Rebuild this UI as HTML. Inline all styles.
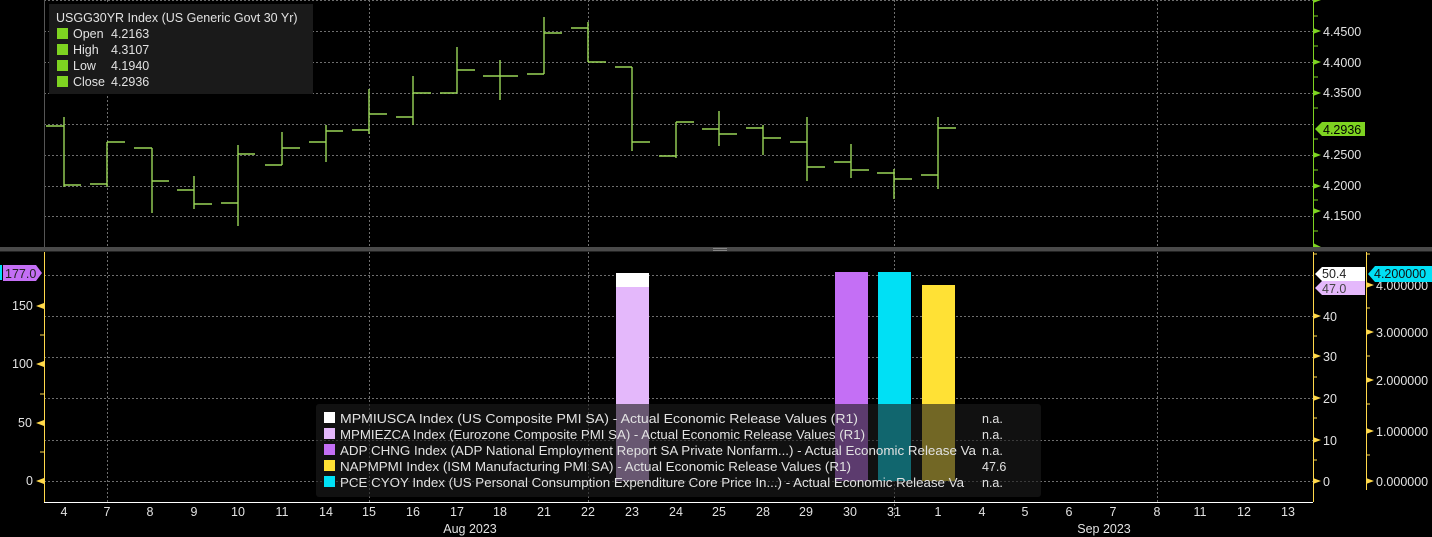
<!DOCTYPE html>
<html><head><meta charset="utf-8"><style>
html,body{margin:0;padding:0;background:#000;width:1432px;height:537px;overflow:hidden}
svg{display:block}
text{font-family:"Liberation Sans",sans-serif;font-size:12.5px;fill:#e2e2e2}
</style></head><body>
<svg width="1432" height="537" viewBox="0 0 1432 537" xmlns="http://www.w3.org/2000/svg">
<rect width="1432" height="537" fill="#000"/>
<g stroke="#6e6e6e" stroke-width="1" stroke-dasharray="2,2" fill="none">
<line x1="44" y1="0.5" x2="1313" y2="0.5"/>
<line x1="44" y1="31.5" x2="1313" y2="31.5"/>
<line x1="44" y1="62.5" x2="1313" y2="62.5"/>
<line x1="44" y1="93.5" x2="1313" y2="93.5"/>
<line x1="44" y1="124.5" x2="1313" y2="124.5"/>
<line x1="44" y1="155.5" x2="1313" y2="155.5"/>
<line x1="44" y1="186.5" x2="1313" y2="186.5"/>
<line x1="44" y1="216.5" x2="1313" y2="216.5"/>
<line x1="44" y1="275.5" x2="1313" y2="275.5"/>
<line x1="44" y1="316.5" x2="1313" y2="316.5"/>
<line x1="44" y1="357.5" x2="1313" y2="357.5"/>
<line x1="44" y1="398.5" x2="1313" y2="398.5"/>
<line x1="44" y1="440.5" x2="1313" y2="440.5"/>
<line x1="44" y1="481.5" x2="1313" y2="481.5"/>
<line x1="107.5" y1="0" x2="107.5" y2="502"/>
<line x1="369.5" y1="0" x2="369.5" y2="502"/>
<line x1="588.5" y1="0" x2="588.5" y2="502"/>
<line x1="894.5" y1="0" x2="894.5" y2="520"/>
<line x1="1157.5" y1="0" x2="1157.5" y2="502"/>
</g>
<line x1="44.5" y1="0" x2="44.5" y2="247" stroke="#555" stroke-width="1"/>
<rect x="49" y="4" width="264" height="90" fill="#1a1a1a"/>
<text x="56" y="22">USGG30YR Index (US Generic Govt 30 Yr)</text>
<rect x="57" y="28" width="11" height="11" fill="#7ed321"/><text x="73" y="38">Open</text><text x="111" y="38">4.2163</text>
<rect x="57" y="44" width="11" height="11" fill="#7ed321"/><text x="73" y="54">High</text><text x="111" y="54">4.3107</text>
<rect x="57" y="60" width="11" height="11" fill="#7ed321"/><text x="73" y="70">Low</text><text x="111" y="70">4.1940</text>
<rect x="57" y="76" width="11" height="11" fill="#7ed321"/><text x="73" y="86">Close</text><text x="111" y="86">4.2936</text>
<g stroke="#9ad658" stroke-width="1.4" fill="none">
<path d="M46 126H64M64 117V187M64 185H81"/>
<path d="M90 184H107M107 142V187M107 142H125"/>
<path d="M134 148H152M152 148V213M152 181H169"/>
<path d="M177 190H194M194 176V209M194 204H212"/>
<path d="M221 203H238M238 145V226M238 154H255"/>
<path d="M265 165H282M282 132V165M282 148H300"/>
<path d="M309 142H326M326 125V162M326 131H343"/>
<path d="M352 130H369M369 89V134M369 114H387"/>
<path d="M396 117H413M413 76V125M413 93H431"/>
<path d="M440 93H457M457 47V93M457 70H475"/>
<path d="M483 76H500M500 60V100M500 76H518"/>
<path d="M527 74H544M544 17V74M544 33H562"/>
<path d="M571 28H588M588 22V62M588 62H606"/>
<path d="M615 67H632M632 67V151M632 142H650"/>
<path d="M659 156H676M676 122V158M676 122H694"/>
<path d="M702 129H719M719 111V146M719 134H737"/>
<path d="M746 128H763M763 125V155M763 138H781"/>
<path d="M790 142H807M807 117V181M807 167H825"/>
<path d="M834 162H851M851 144V178M851 170H869"/>
<path d="M877 173H894M894 169V199M894 179H912"/>
<path d="M921 175H938M938 117V189M938 128H956"/>
</g>
<line x1="1313.5" y1="0" x2="1313.5" y2="247" stroke="#7ed321" stroke-width="1"/>
<g fill="#7ed321">
<path d="M1313 28l8 3-8 3z"/><path d="M1313 59l8 3-8 3z"/><path d="M1313 90l8 3-8 3z"/><path d="M1313 152l8 3-8 3z"/><path d="M1313 183l8 3-8 3z"/><path d="M1313 208l8 3-8 3z"/><path d="M1313 0l8 0-8 3z"/><path d="M1313 243l8 4h-8z"/>
</g>
<g stroke="#7ed321"><path d="M1313 16h5M1313 46h5M1313 77h5M1313 108h5M1313 139h5M1313 170h5M1313 200h5M1313 231h5"/></g>
<text x="1323" y="36">4.4500</text>
<text x="1323" y="67">4.4000</text>
<text x="1323" y="97">4.3500</text>
<text x="1323" y="159">4.2500</text>
<text x="1323" y="190">4.2000</text>
<text x="1323" y="220">4.1500</text>
<path d="M1315 129l7-7h43v14h-43z" fill="#7ed321"/>
<text x="1323" y="134" style="fill:#000">4.2936</text>
<rect x="0" y="247" width="1432" height="4" fill="#4a4a4a"/>
<rect x="0" y="251" width="1432" height="1" fill="#222"/>
<path d="M713 248.5h14M713 250.5h14" stroke="#999" stroke-width="0.8"/>
<rect x="616" y="273" width="33" height="14" fill="#ffffff"/>
<rect x="616" y="287" width="33" height="194" fill="#e4b8fb"/>
<rect x="835" y="272" width="33" height="209" fill="#c46ff5"/>
<rect x="878" y="272" width="33" height="209" fill="#00e0f5"/>
<rect x="922" y="285" width="33" height="196" fill="#ffe135"/>
<rect x="316" y="404" width="725" height="93" rx="3" fill="#1c1c1c" fill-opacity="0.62"/>
<rect x="324" y="412" width="11" height="11" fill="#fff"/>
<rect x="324" y="428" width="11" height="11" fill="#e4b8fb"/>
<rect x="324" y="444" width="11" height="11" fill="#c46ff5"/>
<rect x="324" y="460" width="11" height="11" fill="#ffe135"/>
<rect x="324" y="476" width="11" height="11" fill="#00e0f5"/>
<text x="340" y="423" textLength="518" lengthAdjust="spacingAndGlyphs">MPMIUSCA Index (US Composite PMI SA) - Actual Economic Release Values (R1)</text>
<text x="340" y="439" textLength="525" lengthAdjust="spacingAndGlyphs">MPMIEZCA Index (Eurozone Composite PMI SA) - Actual Economic Release Values (R1)</text>
<text x="340" y="455" textLength="636" lengthAdjust="spacingAndGlyphs">ADP CHNG Index (ADP National Employment Report SA Private Nonfarm...) - Actual Economic Release Va</text>
<text x="340" y="471" textLength="511" lengthAdjust="spacingAndGlyphs">NAPMPMI Index (ISM Manufacturing PMI SA) - Actual Economic Release Values (R1)</text>
<text x="340" y="487" textLength="624" lengthAdjust="spacingAndGlyphs">PCE CYOY Index (US Personal Consumption Expenditure Core Price In...) - Actual Economic Release Va</text>
<text x="982" y="423">n.a.</text><text x="982" y="439">n.a.</text><text x="982" y="455">n.a.</text><text x="982" y="471">47.6</text><text x="982" y="487">n.a.</text>
<line x1="44.5" y1="252" x2="44.5" y2="502" stroke="#ffd84a"/>
<g fill="#ffd84a"><path d="M44 303l-8 3 8 3z"/><path d="M44 361l-8 3 8 3z"/><path d="M44 420l-8 3 8 3z"/><path d="M44 478l-8 3 8 3z"/></g>
<g stroke="#ffd84a"><path d="M44 335h-4M44 394h-4M44 452h-4"/></g>
<text x="12" y="310">150</text><text x="12" y="368">100</text><text x="18" y="427">50</text><text x="26" y="485">0</text>
<rect x="0" y="265" width="2" height="15" fill="#00e0f5"/>
<path d="M3 265h33l6 8-6 8h-33z" fill="#c46ff5"/>
<text x="5" y="278" style="fill:#222">177.0</text>
<line x1="44" y1="502.5" x2="1313" y2="502.5" stroke="#fff"/>
<line x1="1313.5" y1="252" x2="1313.5" y2="502" stroke="#ffd84a"/>
<line x1="1366.5" y1="252" x2="1366.5" y2="490" stroke="#ffd84a"/>
<g fill="#ffd84a">
<path d="M1313 313l8 3-8 3z"/><path d="M1313 353l8 3-8 3z"/><path d="M1313 395l8 3-8 3z"/><path d="M1313 437l8 3-8 3z"/><path d="M1313 478l8 3-8 3z"/>
<path d="M1366 282l8 3-8 3z"/><path d="M1366 329l8 3-8 3z"/><path d="M1366 377l8 3-8 3z"/><path d="M1366 428l8 3-8 3z"/><path d="M1366 478l8 3-8 3z"/>
</g>
<g stroke="#ffd84a"><path d="M1313 254h4M1313 336h4M1313 377h4M1313 418h4M1313 460h4M1366 254h4M1366 308h4M1366 356h4M1366 404h4M1366 455h4"/></g>
<text x="1323" y="321">40</text><text x="1323" y="361">30</text><text x="1323" y="403">20</text><text x="1323" y="445">10</text><text x="1323" y="486">0</text>
<text x="1376" y="290">4.000000</text><text x="1376" y="337">3.000000</text><text x="1376" y="385">2.000000</text><text x="1376" y="436">1.000000</text><text x="1376" y="486">0.000000</text>
<path d="M1315 274l7-7h43v14h-43z" fill="#fff"/>
<text x="1322" y="278" style="fill:#222">50.4</text>
<path d="M1315 288l7-7h43v14h-43z" fill="#e4b8fb"/>
<text x="1322" y="293" style="fill:#444">47.0</text>
<path d="M1368 274l7-8h57v16h-57z" fill="#00e0f5"/>
<text x="1374" y="278" style="fill:#111">4.200000</text>
<g text-anchor="middle" style="font-size:13px">
<text x="64" y="516">4</text><text x="107" y="516">7</text><text x="150" y="516">8</text><text x="194" y="516">9</text><text x="238" y="516">10</text><text x="282" y="516">11</text><text x="326" y="516">14</text><text x="369" y="516">15</text><text x="413" y="516">16</text><text x="457" y="516">17</text><text x="500" y="516">18</text><text x="544" y="516">21</text><text x="588" y="516">22</text><text x="632" y="516">23</text><text x="676" y="516">24</text><text x="719" y="516">25</text><text x="763" y="516">28</text><text x="806" y="516">29</text><text x="850" y="516">30</text><text x="894" y="516">31</text><text x="938" y="516">1</text><text x="982" y="516">4</text><text x="1025" y="516">5</text><text x="1069" y="516">6</text><text x="1113" y="516">7</text><text x="1157" y="516">8</text><text x="1200" y="516">11</text><text x="1244" y="516">12</text><text x="1288" y="516">13</text>
<text x="470" y="533">Aug 2023</text><text x="1104" y="533">Sep 2023</text>
</g>
</svg>
</body></html>
